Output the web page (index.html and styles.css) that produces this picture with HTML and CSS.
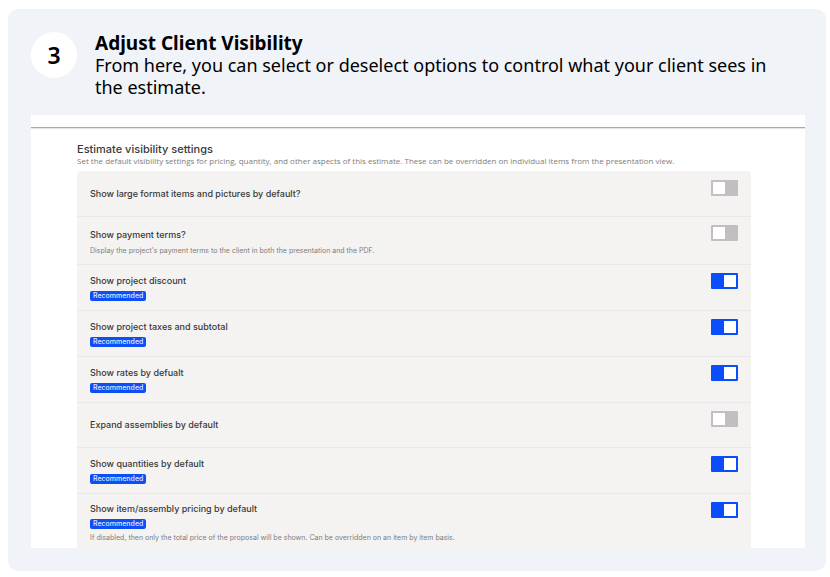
FILE: index.html
```html
<!DOCTYPE html>
<html lang="en">
<head>
<meta charset="utf-8">
<meta name="viewport" content="width=device-width, initial-scale=1">
<title>Adjust Client Visibility</title>
<link rel="stylesheet" href="styles.css">
</head>
<body>
<main class="card">
  <header class="step">
    <span class="step-number">3</span>
    <div class="step-text">
      <h1>Adjust Client Visibility</h1>
      <p>From here, you can select or deselect options to control what your client sees in the estimate.</p>
    </div>
  </header>
  <section class="panel">
    <div class="settings">
      <h2>Estimate visibility settings</h2>
      <p class="intro">Set the default visibility settings for pricing, quantity, and other aspects of this estimate. These can be overridden on individual items from the presentation view.</p>
      <ul class="options">
        <li class="option">
          <div class="option-text"><label for="large">Show large format items and pictures by default?</label></div>
          <input class="toggle" type="checkbox" id="large">
        </li>
        <li class="option described">
          <div class="option-text"><label for="terms">Show payment terms?</label>
            <p>Display the project's payment terms to the client in both the presentation and the PDF.</p></div>
          <input class="toggle" type="checkbox" id="terms">
        </li>
        <li class="option tagged">
          <div class="option-text"><label for="discount">Show project discount</label><span class="tag">Recommended</span></div>
          <input class="toggle" type="checkbox" id="discount" checked>
        </li>
        <li class="option tagged">
          <div class="option-text"><label for="taxes">Show project taxes and subtotal</label><span class="tag">Recommended</span></div>
          <input class="toggle" type="checkbox" id="taxes" checked>
        </li>
        <li class="option tagged">
          <div class="option-text"><label for="rates">Show rates by defualt</label><span class="tag">Recommended</span></div>
          <input class="toggle" type="checkbox" id="rates" checked>
        </li>
        <li class="option">
          <div class="option-text"><label for="assemblies">Expand assemblies by default</label></div>
          <input class="toggle" type="checkbox" id="assemblies">
        </li>
        <li class="option tagged">
          <div class="option-text"><label for="quantities">Show quantities by default</label><span class="tag">Recommended</span></div>
          <input class="toggle" type="checkbox" id="quantities" checked>
        </li>
        <li class="option tagged described">
          <div class="option-text"><label for="pricing">Show item/assembly pricing by default</label><span class="tag">Recommended</span>
            <p>If disabled, then only the total price of the proposal will be shown. Can be overridden on an item by item basis.</p></div>
          <input class="toggle" type="checkbox" id="pricing" checked>
        </li>
      </ul>
    </div>
  </section>
</main>
</body>
</html>
```
FILE: styles.css
```css
* {
  box-sizing: border-box;
}

body {
  margin: 9px 4px 6px 8px;
  background: #fff;
  color: #000;
  font-family: "Noto Sans", "Open Sans", sans-serif;
}

h1, h2, p, ul {
  margin: 0;
  padding: 0;
}

.card {
  padding: 23px 21px 23px 23px;
  border-radius: 10px;
  background: #f0f3f8;
}

.step {
  display: flex;
  gap: 18px;
  margin-bottom: 17px;
}

.step-number {
  display: flex;
  flex: none;
  align-items: center;
  justify-content: center;
  width: 46px;
  height: 46px;
  border-radius: 50%;
  background: #fff;
  font-size: 23px;
  font-weight: 600;
}

.step-text {
  padding-right: 16px;
  font-size: 18px;
  line-height: 22px;
}

.step-text h1 {
  font-size: 19px;
  font-weight: 700;
}

.panel {
  padding-top: 12px;
  background: #fff;
}

.settings {
  padding: 14px 54px 0 46px;
  border-top: 1px solid #aaa;
  box-shadow: inset 0 1px #e4e4e4;
  color: #383838;
  font-family: Inter, sans-serif;
}

.settings h2 {
  font-size: 11px;
  font-weight: 500;
  line-height: 14px;
}

.intro {
  padding-bottom: 5px;
  color: #7d7d7d;
  font-family: "Open Sans", sans-serif;
  font-size: 8px;
  line-height: 10px;
}

.options {
  border-radius: 3px 3px 0 0;
  background: #f4f3f2;
  list-style: none;
}

.option {
  display: flex;
  justify-content: space-between;
  min-height: 45px;
  padding: 0 13px;
  border-top: 1px solid #e8e8e8;
}

.option:first-child {
  border-top-color: transparent;
}

.option-text {
  display: flex;
  flex-direction: column;
  align-items: flex-start;
  justify-content: center;
}

.option label {
  font-size: 9px;
  font-weight: 500;
  line-height: 14px;
}

.option p {
  color: #7d7d7d;
  font-size: 7px;
  line-height: 12px;
}

.tagged {
  min-height: 46px;
}

.tag {
  margin-top: 3px;
  padding: 0 3px;
  border-radius: 2px;
  background: #0d4ff5;
  color: #dfe8ff;
  font-size: 7px;
  font-weight: 500;
  line-height: 10px;
}

.described {
  min-height: 48px;
}

.described .option-text {
  padding-top: 3px;
}

.described p {
  margin-top: 3px;
}

.tagged.described {
  min-height: 55px;
}

.toggle {
  flex: none;
  width: 27px;
  height: 16px;
  margin: 8px 0 0;
  padding: 2px;
  appearance: none;
  border-radius: 1px;
  background: #c2bec1;
}

.toggle::before {
  display: block;
  width: 12px;
  height: 12px;
  background: #fff;
  content: "";
}

.toggle:checked {
  background: #0a4dfb;
}

.toggle:checked::before {
  margin-left: auto;
}
```
